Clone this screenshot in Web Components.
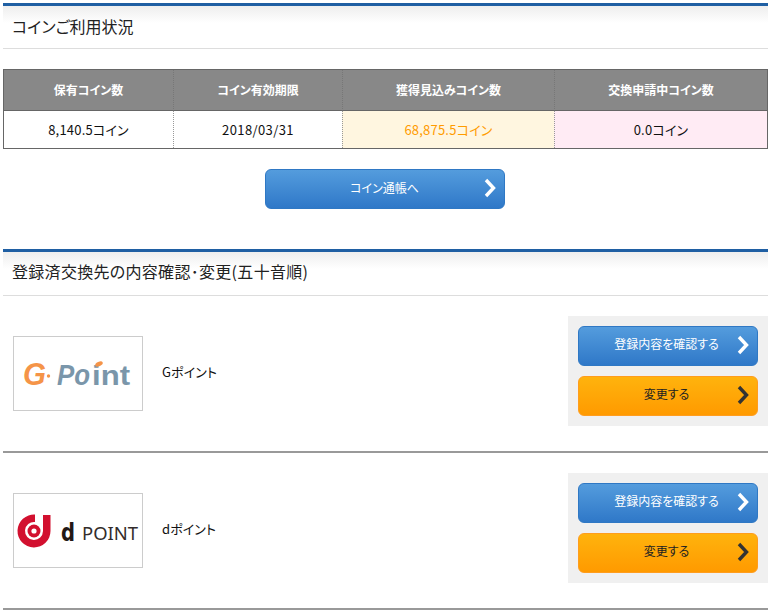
<!DOCTYPE html>
<html lang="ja">
<head>
<meta charset="utf-8">
<title>コインご利用状況</title>
<style>
    html, body { background: #fff; }
    body {
        margin: 3px 4px 0 3px;
        font-family: "Noto Sans CJK JP", "Liberation Sans", sans-serif;
        color: #333;
    }
</style>
</head>
<body>
<section-heading style="--inner: 42px; --pad: 2px">コインご利用状況</section-heading>
<coin-table></coin-table>
<div style="display:flex;justify-content:center;padding:20px 2px 40px 0">
    <action-button style="--w:240px; --text-pad:3px; --text-right:0px">コイン通帳へ</action-button>
</div>
<section-heading style="--inner: 43px; --pad: 6px; --ls: 0.3px">登録済交換先の内容確認･変更(五十音順)</section-heading>
<point-row name="Gポイント" logo="g"></point-row>
<point-row name="dポイント" logo="d"></point-row>

<script>
class SectionHeading extends HTMLElement {
    constructor() {
        super();
        this.attachShadow({ mode: "open" });
        this.shadowRoot.innerHTML = `
            <style>
                :host {
                    display: block;
                    border-top: 3px solid #1f5fa3;
                    border-bottom: 1px solid #ddd;
                    background: linear-gradient(#eeeeee, #ffffff 17px);
                    height: var(--inner);
                    font-size: 16px;
                    color: #222;
                    letter-spacing: var(--ls, 0);
                    font-feature-settings: "palt";
                }
                div {
                    height: 100%;
                    display: flex;
                    align-items: center;
                    padding: 0 0 var(--pad, 0) 9px;
                    box-sizing: border-box;
                }
            </style>
            <div><slot></slot></div>
        `;
    }
}

class CoinTable extends HTMLElement {
    constructor() {
        super();
        this.attachShadow({ mode: "open" });
        this.shadowRoot.innerHTML = `
            <style>
                :host {
                    display: block;
                    margin-top: 20px;
                    font-feature-settings: "palt";
                }
                .grid {
                    display: grid;
                    grid-template-columns: 169px 169px 212px 1fr;
                    grid-template-rows: 41px 37px;
                    border: 1px solid #666;
                }
                .cell {
                    display: flex;
                    align-items: center;
                    justify-content: center;
                    font-size: 13px;
                    letter-spacing: 0.2px;
                    color: #111;
                    background: #fff;
                    border-left: 1px dotted #999;
                }
                .cell.first { border-left: 0; }
                .head {
                    background: #888;
                    color: #fff;
                    font-weight: bold;
                    font-size: 12px;
                    letter-spacing: 0;
                    padding-bottom: 2px;
                    box-sizing: border-box;
                    border-bottom: 1px solid #666;
                    border-left-color: #777;
                }
                .date { letter-spacing: 0.4px; }
                .earn { background: #fff6e0; color: #ff9c00; }
                .pending { background: #ffebf4; }
            </style>
            <div class="grid">
                <div class="cell head first">保有コイン数</div>
                <div class="cell head">コイン有効期限</div>
                <div class="cell head">獲得見込みコイン数</div>
                <div class="cell head">交換申請中コイン数</div>
                <div class="cell first">8,140.5コイン</div>
                <div class="cell date">2018/03/31</div>
                <div class="cell earn">68,875.5コイン</div>
                <div class="cell pending">0.0コイン</div>
            </div>
        `;
    }
}

class ActionButton extends HTMLElement {
    constructor() {
        super();
        this.attachShadow({ mode: "open" });
        const orange = this.getAttribute("variant") === "orange";
        const stroke = orange ? "#333" : "#fff";
        this.shadowRoot.innerHTML = `
            <style>
                :host {
                    display: block;
                    width: var(--w, 180px);
                    height: 40px;
                }
                a {
                    position: relative;
                    display: flex;
                    align-items: center;
                    justify-content: center;
                    height: 100%;
                    box-sizing: border-box;
                    padding-bottom: var(--text-pad, 5px);
                    padding-right: var(--text-right, 3px);
                    border-radius: 6px;
                    border: 1px solid ${orange ? "#ff9d1e" : "#2f78c4"};
                    background: ${orange
                        ? "linear-gradient(#ffb30d, #ff9a00)"
                        : "linear-gradient(#549cdd, #2f78c8)"};
                    color: ${orange ? "#222" : "#fff"};
                    font-size: 12px;
                    font-feature-settings: "palt";
                }
                svg { position: absolute; right: 8px; top: 8px; }
            </style>
            <a>
                <slot></slot>
                <svg width="12" height="20" viewBox="0 0 12 20">
                    <polyline points="2,2 9.5,10 2,18" fill="none" stroke="${stroke}" stroke-width="3.4"/>
                </svg>
            </a>
        `;
    }
}

const LOGOS = {
    g: `<svg width="128" height="73" viewBox="0 0 128 73" font-family="Liberation Sans" font-weight="bold">
            <text x="9" y="48" font-size="32" font-style="italic" fill="#f59448" textLength="23" lengthAdjust="spacingAndGlyphs">G</text>
            <circle cx="34.500" cy="39" r="1.700" fill="#f59448"/>
            <g fill="#7a96aa">
                <text x="43" y="48" font-size="29" font-style="italic" textLength="33" lengthAdjust="spacingAndGlyphs">Po</text>
                <text x="78" y="48" font-size="28" textLength="38" lengthAdjust="spacingAndGlyphs">int</text>
            </g>
            <ellipse cx="85" cy="27" rx="4" ry="2.200" transform="rotate(-25 85 27)" fill="#f59448"/>
        </svg>`,
    d: `<svg width="128" height="73" viewBox="0 0 128 73">
            <path d="M21 20.500 A16.500 16.500 0 1 0 36.500 37 V21 H29 V37 A9 9 0 1 1 21 28 Z" fill="#d2102f"/>
            <circle cx="20" cy="37" r="6.500" fill="#d2102f"/>
            <circle cx="20" cy="37" r="2.600" fill="#fff"/>
            <text x="47" y="47" font-family="DejaVu Sans, Liberation Sans" font-size="25" font-weight="bold" fill="#231815" textLength="14" lengthAdjust="spacingAndGlyphs">d</text>
            <text x="68" y="46" font-family="Noto Sans, Liberation Sans" font-size="18.500" fill="#332c2b" textLength="56" lengthAdjust="spacingAndGlyphs">POINT</text>
        </svg>`
};

class PointRow extends HTMLElement {
    constructor() {
        super();
        this.attachShadow({ mode: "open" });
        const name = this.getAttribute("name");
        const logo = LOGOS[this.getAttribute("logo")];
        this.shadowRoot.innerHTML = `
            <style>
                :host {
                    display: flex;
                    align-items: center;
                    padding: 20px 0 25px;
                    border-bottom: 2px solid #999;
                }
                .logo {
                    width: 128px;
                    height: 73px;
                    border: 1px solid #ccc;
                    margin: 4px 0 0 10px;
                    flex: none;
                }
                .logo svg { display: block; }
                .name {
                    margin-left: 19px;
                    flex: 1;
                    font-size: 13px;
                    letter-spacing: 0.1px;
                    color: #111;
                    font-feature-settings: "palt";
                }
                .panel {
                    width: 200px;
                    box-sizing: border-box;
                    padding: 10px;
                    display: flex;
                    flex-direction: column;
                    gap: 10px;
                    background-color: #f0f0f0;
                    background-image: radial-gradient(#e8e8e8 0.6px, transparent 0.7px);
                    background-size: 4px 4px;
                }
            </style>
            <div class="logo">${logo}</div>
            <div class="name">${name}</div>
            <div class="panel">
                <action-button>登録内容を確認する</action-button>
                <action-button variant="orange">変更する</action-button>
            </div>
        `;
    }
}

customElements.define("section-heading", SectionHeading);
customElements.define("coin-table", CoinTable);
customElements.define("action-button", ActionButton);
customElements.define("point-row", PointRow);
</script>
</body>
</html>
